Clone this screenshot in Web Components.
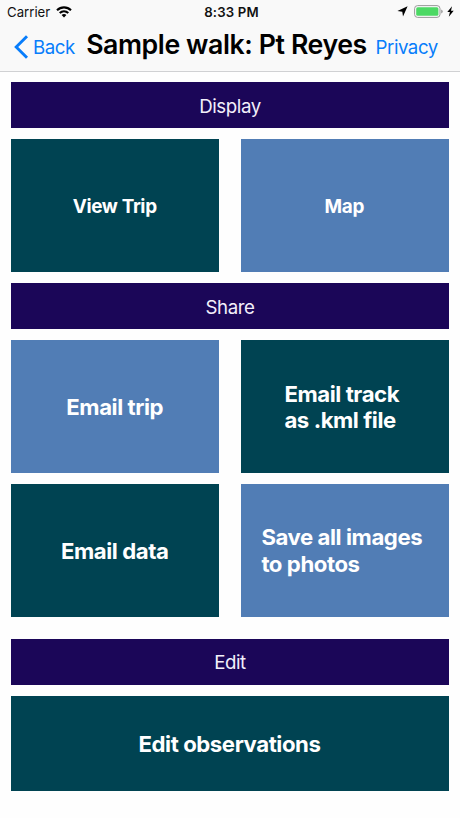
<!DOCTYPE html>
<html lang="en">
<head>
<meta charset="utf-8">
<title>Sample walk: Pt Reyes</title>
<style>
html,body{margin:0;height:100%}
body{background:#fefefe;font-family:Inter,"Liberation Sans",sans-serif;overflow:hidden}
</style>
</head>
<body>
<trip-screen></trip-screen>
<script>
function define(name, html) {
  const t = document.createElement('template');
  t.innerHTML = html;
  customElements.define(name, class extends HTMLElement {
    constructor() {
      super();
      this.attachShadow({mode: 'open'}).append(t.content.cloneNode(true));
    }
  });
}

define('status-bar', `
<style>
:host{display:grid;grid-template-columns:1fr auto 1fr;align-items:center;height:23px;padding:1px 6px 0 7px;box-sizing:border-box;font-size:13.2px;line-height:22px;color:#111}
.side{display:flex;align-items:center}
.right{justify-content:flex-end}
.time{font-weight:600;letter-spacing:.15px;padding-left:2px}
svg{display:block}
.wifi{margin:0 0 1px 6px}
.bat{margin:0 4px 0 6px}
.right svg{margin-bottom:1px}
</style>
<div class="side"><span>Carrier</span>
<svg class="wifi" width="16" height="12" viewBox="0 0 16 12" fill="none" stroke="#000" stroke-width="2.1"><path d="M1 4.3C5 .4 11 .4 15 4.3M3.7 7.1c2.5-2.3 6.1-2.3 8.6 0"/><path d="M8 11.4 5.6 9c1.4-1.2 3.4-1.2 4.8 0z" fill="#000" stroke="none"/></svg></div>
<span class="time">8:33 PM</span>
<div class="side right">
<svg width="11" height="11" viewBox="0 0 11 11"><path d="M10.6.3 6 10.6 5.3 5.7.4 5z" fill="#000"/></svg>
<svg class="bat" width="29" height="13" viewBox="0 0 29 13"><rect x=".6" y=".6" width="25.4" height="11.8" rx="3" fill="#fafafa" stroke="#999" stroke-width="1"/><rect x="2.2" y="2.2" width="22.2" height="8.6" rx="1.5" fill="#4cd964"/><path d="M27.2 4.5q1.5.6 1.5 2t-1.5 2z" fill="#999"/></svg>
<svg width="7" height="11" viewBox="0 0 7 11"><path d="M5 .2.3 6h2.6L1.8 10.8 6.7 4.7H4z" fill="#000"/></svg>
</div>`);

define('nav-bar', `
<style>
:host{display:grid;grid-template-columns:86px 1fr 85px;align-items:center;height:48px;border-bottom:1px solid #d0d1d3;color:#087dfb;font-size:18.7px;letter-spacing:-.48px;box-sizing:content-box}
.back{display:flex;align-items:center;padding-left:14px;gap:4px}
.title{color:#000;font-size:26.7px;font-weight:600;letter-spacing:-.41px;white-space:nowrap;line-height:32px;padding:0 8px 7px 0;display:flex;justify-content:center}
.back,.right{white-space:nowrap}
.right{padding-left:.6px}
svg{display:block}
</style>
<div class="back"><svg width="15" height="24" viewBox="0 0 15 24" fill="none" stroke="#087dfb" stroke-width="2.9"><path d="M13 1.2 2.2 12 13 22.8"/></svg><slot name="back"></slot></div>
<div class="title"><slot></slot></div>
<div class="right"><slot name="action"></slot></div>`);

define('section-bar', `
<style>
:host{display:flex;align-items:center;justify-content:center;grid-column:1/-1;background:#1b0658;color:#f2effa;font-size:18.7px;letter-spacing:-.42px;line-height:24px;padding-top:3px;box-sizing:border-box}
</style><slot></slot>`);

define('action-tile', `
<style>
:host{display:flex;align-items:center;justify-content:center;background:#004352;color:#fff;font-size:22.2px;font-weight:700;letter-spacing:-.44px;line-height:26.6px;white-space:pre-line;box-sizing:border-box;padding:1px 1px 0 0}
:host([tone=blue]){background:#517db5}
:host([size=small]){font-size:18.9px;letter-spacing:-.35px;padding-top:3px}
:host([lines="2"]){padding-right:6px}
:host([wide]){grid-column:1/-1}
</style><span><slot></slot></span>`);

define('trip-screen', `
<style>
:host{display:flex;flex-direction:column;height:818px}
header{background:#f9f9f9}
main{display:grid;grid-template-columns:207.6px 207.6px;column-gap:22px;grid-template-rows:45.8px 132.7px 45.8px 132.7px 132.6px 56.9px 95.1px;row-gap:11.2px;padding:10.45px 11.4px 0}
.gap{margin-top:11.2px}
</style>
<header>
<status-bar></status-bar>
<nav-bar><span slot="back">Back</span><span>Sample walk: Pt Reyes</span><span slot="action">Privacy</span></nav-bar>
</header>
<main>
<section-bar>Display</section-bar>
<action-tile size="small">View Trip</action-tile>
<action-tile size="small" tone="blue">Map</action-tile>
<section-bar>Share</section-bar>
<action-tile tone="blue">Email trip</action-tile>
<action-tile lines="2">Email track
as .kml file</action-tile>
<action-tile>Email data</action-tile>
<action-tile tone="blue" lines="2">Save all images
to photos</action-tile>
<section-bar class="gap">Edit</section-bar>
<action-tile wide>Edit observations</action-tile>
</main>`);
</script>
</body>
</html>
